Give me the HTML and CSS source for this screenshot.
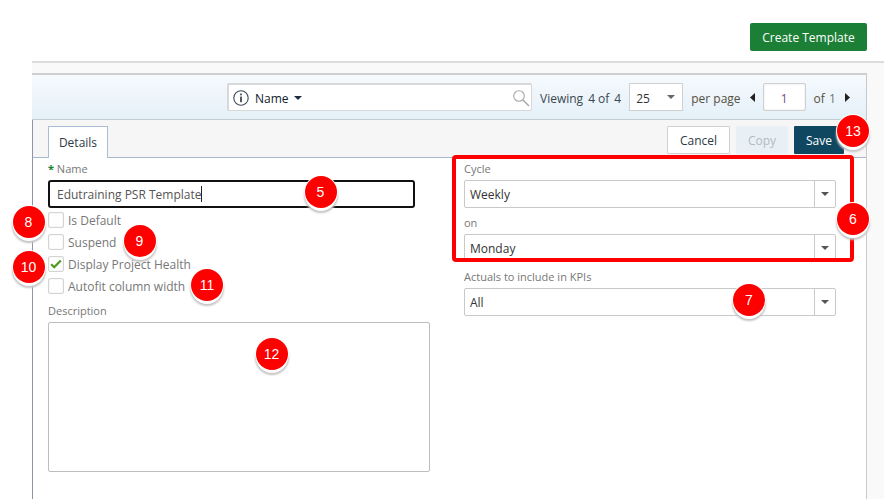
FILE: index.html
```html
<!DOCTYPE html>
<html lang="en">
<head>
<meta charset="utf-8">
<title>Create Template</title>
<link rel="stylesheet" href="styles.css">
</head>
<body>
<header class="top"><button class="btn-create">Create Template</button></header>
<main class="main">
  <section class="panel">
    <div class="toolbar">
      <div class="search">
        <svg class="info" width="16" height="16" viewBox="0 0 16 16"><circle cx="8" cy="8" r="7.2" fill="none" stroke="#3c4a57" stroke-width="1.1"/><rect x="7.2" y="6.6" width="1.6" height="5.6" fill="#27323c"/><rect x="7.2" y="3.6" width="1.6" height="1.7" fill="#27323c"/></svg>
        <span class="search-name">Name</span>
        <svg class="caret" width="8" height="4" viewBox="0 0 8 4"><path d="M0 0h8L4 4z" fill="#1e2d3d"/></svg>
        <svg class="mag" width="18" height="18" viewBox="0 0 18 18"><circle cx="7" cy="7" r="5.3" fill="none" stroke="#a9a9a9" stroke-width="1.1"/><path d="M11 11l6 6" stroke="#a9a9a9" stroke-width="1.5"/></svg>
      </div>
      <span class="viewing">Viewing</span>
      <span class="count">4 of</span>
      <span class="count">4</span>
      <div class="page-size"><span class="page-size-val">25</span><svg width="8" height="4" viewBox="0 0 8 4"><path d="M0 0h8L4 4z" fill="#666"/></svg></div>
      <span class="per">per page</span>
      <svg class="pg-left" width="5" height="9" viewBox="0 0 5 9"><path d="M5 0v9L0 4.5z" fill="#222"/></svg>
      <div class="page-num">1</div>
      <span class="of">of</span>
      <span class="of-n">1</span>
      <svg class="pg-right" width="5" height="9" viewBox="0 0 5 9"><path d="M0 0v9l5-4.5z" fill="#222"/></svg>
    </div>
    <div class="tabbar">
      <div class="tab">Details</div>
      <div class="actions">
        <button class="btn btn-cancel">Cancel</button>
        <button class="btn btn-copy">Copy</button>
        <button class="btn btn-save">Save</button>
      </div>
    </div>
    <div class="form">
      <div class="col-left">
        <div class="label label-req"><span class="star">*</span> Name</div>
        <div class="name-input">Edutraining PSR Template<span class="cursor"></span></div>
        <div class="checks">
          <div class="check"><span class="box"></span>Is Default</div>
          <div class="check"><span class="box"></span>Suspend</div>
          <div class="check"><span class="box"><svg width="12" height="10" viewBox="0 0 12 10"><path d="M1.2 5.2l3 3L10.8 1.4" fill="none" stroke="#4c9a1c" stroke-width="2.2"/></svg></span>Display Project Health</div>
          <div class="check"><span class="box"></span>Autofit column width</div>
        </div>
        <div class="label label-desc">Description</div>
        <div class="textarea"></div>
      </div>
      <div class="col-right">
        <div class="label">Cycle</div>
        <div class="select"><span class="select-val">Weekly</span><span class="select-arrow"><svg width="8" height="4" viewBox="0 0 8 4"><path d="M0 0h8L4 4z" fill="#555"/></svg></span></div>
        <div class="label label-gap">on</div>
        <div class="select"><span class="select-val">Monday</span><span class="select-arrow"><svg width="8" height="4" viewBox="0 0 8 4"><path d="M0 0h8L4 4z" fill="#555"/></svg></span></div>
        <div class="label label-gap">Actuals to include in KPIs</div>
        <div class="select"><span class="select-val">All</span><span class="select-arrow"><svg width="8" height="4" viewBox="0 0 8 4"><path d="M0 0h8L4 4z" fill="#555"/></svg></span></div>
      </div>
    </div>
  </section>
</main>
<div class="highlight"></div>
<span class="badge b5">5</span>
<span class="badge b6">6</span>
<span class="badge b7">7</span>
<span class="badge b8">8</span>
<span class="badge b9">9</span>
<span class="badge b10">10</span>
<span class="badge b11">11</span>
<span class="badge b12">12</span>
<span class="badge b13">13</span>
</body>
</html>
```
FILE: styles.css
```css
* { box-sizing: border-box; }
html, body { margin: 0; height: 499px; overflow: hidden; background: #fff; }
body { font-family: "Open Sans", sans-serif; font-size: 12px; color: #333; position: relative; }
button { font-family: inherit; font-size: 12px; cursor: pointer; }

.top { height: 61px; display: flex; justify-content: flex-end; align-items: flex-start; padding: 23px 17px 0 0; }
.btn-create { width: 117px; height: 28px; background: #1b7f36; color: #fff; border: 0; border-radius: 2px; padding: 0; }

.main { height: 438px; margin-left: 32px; border-top: 2px solid #dcdcdc; background: #f9f9f9; padding: 10px 17px 0 0; }
.panel { height: 100%; background: #fff; border-top: 2px solid #cfcfcf; border-right: 1px solid #c9c9c9; display: flex; flex-direction: column; }

.toolbar { height: 45px; flex: none; background: linear-gradient(#f6fafd, #e4f0f8); border-bottom: 1px solid #c4ccd2; display: flex; align-items: center; padding-left: 195px; color: #3a4650; }
.search { width: 305px; height: 28px; background: #fff; border: 1px solid #d8d8d8; border-top-width: 2px; border-left-width: 2px; border-radius: 2px; display: flex; align-items: center; padding-left: 4px; }
.info { flex: none; }
.search-name { margin-left: 6px; padding-top: 2px; font-weight: 500; color: #0f1c2a; }
.caret { margin-left: 5px; flex: none; }
.mag { margin-left: auto; margin-right: 1px; }
.viewing { margin-left: 8px; padding-top: 2px; }
.count { margin-left: 5px; padding-top: 2px; }
.page-size { margin-left: 8px; width: 54px; height: 28px; background: #fff; border: 1px solid #d0d0d0; display: flex; align-items: center; justify-content: space-between; padding: 0 7px 0 6px; color: #333; }
.page-size-val { padding-top: 2px; }
.per { margin-left: 8px; padding-top: 2px; color: #55503f; }
.pg-left { margin-left: 9px; }
.page-num { margin-left: 8px; width: 43px; height: 28px; padding-top: 2px; background: #fff; border: 1px solid #d0d0d0; border-radius: 2px; box-shadow: inset 0 0 2px #ddd; display: flex; align-items: center; justify-content: center; color: #7b4a8c; }
.of { margin-left: 8px; padding-top: 2px; color: #55503f; }
.of-n { margin-left: 4px; padding-top: 2px; color: #6a7680; }
.pg-right { margin-left: 9px; }

.tabbar { height: 38px; flex: none; background: #f6f6f6; border-left: 1px solid #8d96a8; border-bottom: 1px solid #a9b7cc; display: flex; padding-left: 15px; }
.tab { margin-top: 6px; width: 60px; height: 32px; background: #fff; border: 1px solid #a9bdd6; border-bottom: 0; display: flex; align-items: center; justify-content: center; color: #2d3a46; font-weight: 500; }
.actions { margin-left: auto; margin-right: 22px; margin-top: 6px; display: flex; gap: 6px; height: 28px; }
.btn { height: 28px; padding: 0; border-radius: 1px; }
.btn-cancel { width: 63px; background: #fff; border: 1px solid #d0d0d0; color: #2d3a46; }
.btn-copy { width: 52px; background: #e8eff5; border: 0; color: #b2bcc4; }
.btn-save { width: 50px; background: #0f4761; border: 0; color: #fff; }

.form { flex: 1; border-left: 1px solid #8d96a8; padding-left: 15px; display: flex; }
.col-left { width: 382px; }
.col-right { width: 372px; margin-left: 34px; }
.label { height: 22px; padding-top: 3px; line-height: 16px; font-size: 11px; color: #777; }
.label-req { color: #777; font-weight: 500; }
.star { color: #1b7f36; font-weight: 700; }
.label-gap { height: 26px; padding-top: 7px; }
.name-input { width: 367px; height: 28px; border: 2px solid #111; border-radius: 3px; padding-left: 7px; line-height: 26px; color: #555; white-space: nowrap; }
.cursor { display: inline-block; width: 1px; height: 16px; background: #222; vertical-align: -3px; }
.checks { margin-top: 4px; display: flex; flex-direction: column; gap: 6px; }
.check { height: 16px; display: flex; align-items: center; color: #777; white-space: nowrap; }
.box { width: 16px; height: 16px; margin-right: 4px; border: 1px solid #d4d4d4; border-radius: 2px; background: #fff; box-shadow: inset 0 0 2px #e5e5e5; display: flex; align-items: center; justify-content: center; }
.label-desc { margin-top: 9px; height: 19px; padding-top: 0; }
.textarea { width: 382px; height: 150px; border: 1px solid #bdbdbd; border-radius: 2px; background: #fff; }
.select { width: 372px; height: 28px; border: 1px solid #c9c9c9; border-radius: 2px; background: #fff; display: flex; align-items: stretch; }
.select-val { flex: 1; padding-left: 5px; line-height: 28px; color: #333; }
.select-arrow { width: 21px; border-left: 1px solid #c9c9c9; display: flex; align-items: center; justify-content: center; }

.highlight { position: absolute; left: 452px; top: 155px; width: 402px; height: 107px; border: 4px solid #f00; border-radius: 4px; }
.badge { position: absolute; width: 32px; height: 32px; margin: -16px 0 0 -16px; border-radius: 50%; background: #f00; color: #fff; font-family: "Liberation Sans", sans-serif; font-size: 14px; line-height: 32px; text-align: center; box-shadow: 0 0 0 1px #fff, 0 3px 0 0 #fff, 0 4px 2px 1px #c4c4c4; }
.b5 { left: 320.5px; top: 192px; }
.b6 { left: 853px; top: 218.5px; }
.b7 { left: 749px; top: 299.5px; }
.b8 { left: 28.5px; top: 221.5px; }
.b9 { left: 139.5px; top: 240.5px; }
.b10 { left: 28.5px; top: 267px; }
.b11 { left: 207px; top: 284.5px; }
.b12 { left: 271.5px; top: 353.5px; }
.b13 { left: 853px; top: 130.5px; }
```
